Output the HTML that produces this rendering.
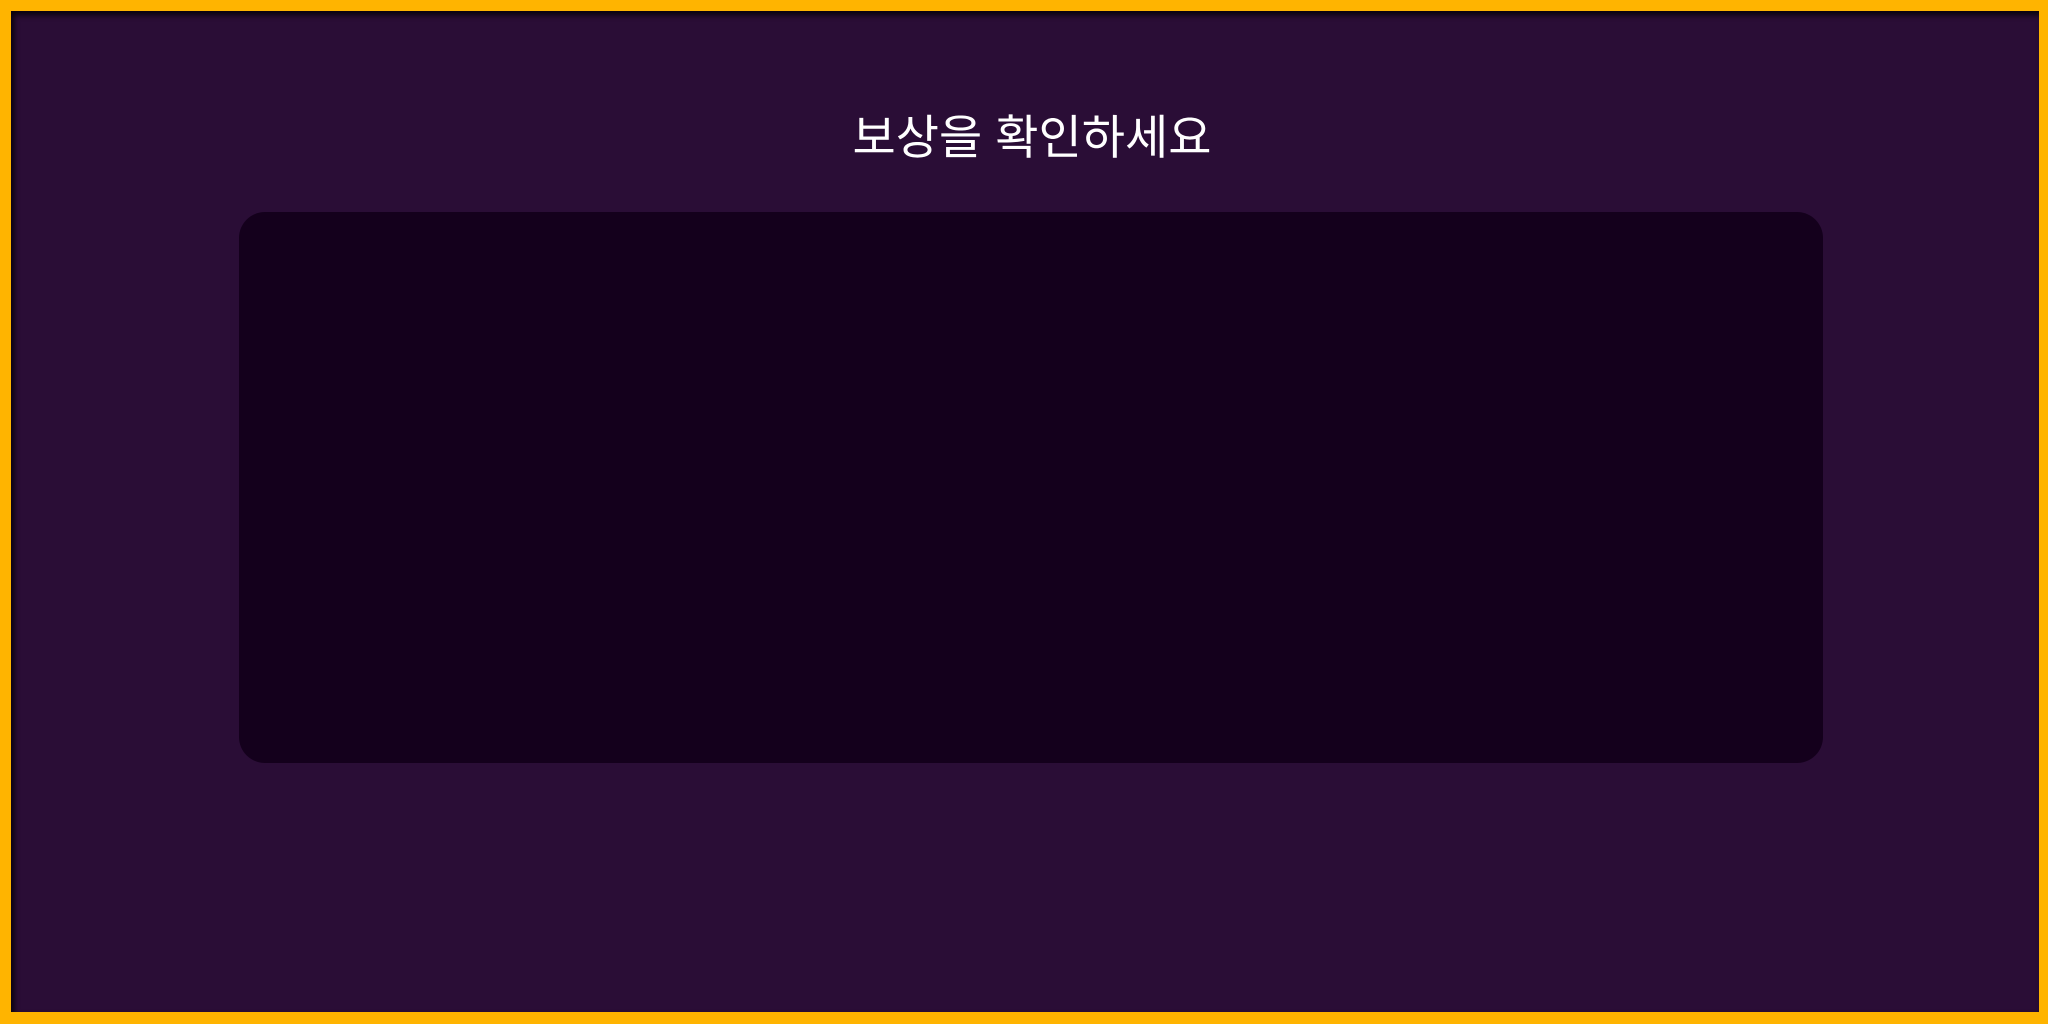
<!DOCTYPE html>
<html><head><meta charset="utf-8"><style>
html,body{margin:0;padding:0}
body{width:2048px;height:1024px;overflow:hidden;background:#2a0d36;position:relative;box-sizing:border-box;border:11px solid #ffb400;border-right-width:9px;border-bottom-width:12px;box-shadow:inset 3px 4px 6px rgba(0,0,0,.8)}
.t{position:absolute;left:0;right:0;top:97px;text-align:center;color:#fff;font:47px/60px "Liberation Sans","Noto Sans CJK KR",sans-serif;padding-left:14px}
.p{position:absolute;left:228px;top:201px;width:1584px;height:551px;background:#14001c;border-radius:26px}
</style></head><body>
<div class="t">보상을 확인하세요</div>
<div class="p"></div>
</body></html>
